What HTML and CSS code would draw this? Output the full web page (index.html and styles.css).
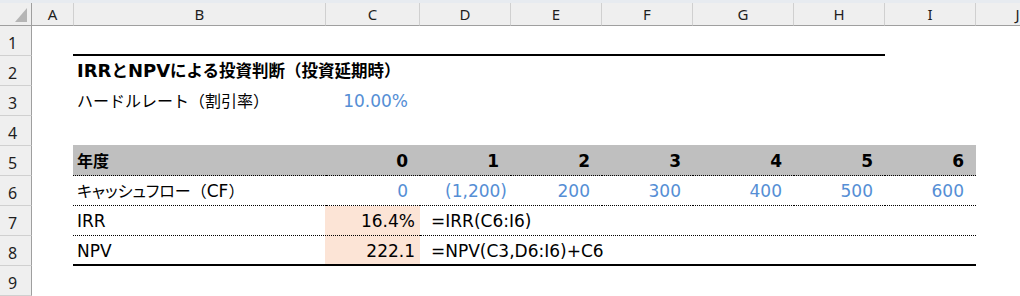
FILE: index.html
```html
<!DOCTYPE html>
<html lang="ja">
<head>
<meta charset="utf-8">
<title>IRRとNPVによる投資判断</title>
<link rel="stylesheet" href="styles.css">
</head>
<body>
<div class="sheet">
  <div class="topstrip"></div>
  <div class="grid">
    <div class="corner"><svg width="12" height="14" viewBox="0 0 12 14"><polygon points="12,0 12,14 0,14" fill="#b5b5b5"/></svg></div>
    <div class="ch">A</div>
    <div class="ch">B</div>
    <div class="ch">C</div>
    <div class="ch">D</div>
    <div class="ch">E</div>
    <div class="ch">F</div>
    <div class="ch">G</div>
    <div class="ch">H</div>
    <div class="ch">I</div>
    <div class="ch">J</div>

    <div class="rh">1</div>
    <div class="c"></div>
    <div class="c b rule-bottom span-bh"></div>
    <div class="c"></div>
    <div class="c"></div>

    <div class="rh">2</div>
    <div class="c"></div>
    <div class="c b title">IRR<span class="j">と</span>NPV<span class="j">による投資判断（投資延期時）</span></div>
    <div class="c span-c-end"></div>

    <div class="rh">3</div>
    <div class="c"></div>
    <div class="c b"><span class="j">ハードルレート（割引率）</span></div>
    <div class="c num blue">10.00%</div>
    <div class="c span-d-end"></div>

    <div class="rh">4</div>
    <div class="c span-a-end"></div>

    <div class="rh">5</div>
    <div class="c"></div>
    <div class="c b hdr bold"><span class="j">年度</span></div>
    <div class="c hdr bold num">0</div>
    <div class="c hdr bold num">1</div>
    <div class="c hdr bold num">2</div>
    <div class="c hdr bold num">3</div>
    <div class="c hdr bold num">4</div>
    <div class="c hdr bold num">5</div>
    <div class="c hdr bold num">6</div>
    <div class="c"></div>

    <div class="rh">6</div>
    <div class="c"></div>
    <div class="c b dot"><span class="j kana">キャッシュフロー</span><span class="j">（</span>CF<span class="j">）</span></div>
    <div class="c dot num blue">0</div>
    <div class="c dot num neg blue">(1,200)</div>
    <div class="c dot num blue">200</div>
    <div class="c dot num blue">300</div>
    <div class="c dot num blue">400</div>
    <div class="c dot num blue">500</div>
    <div class="c dot num blue">600</div>
    <div class="c"></div>

    <div class="rh">7</div>
    <div class="c"></div>
    <div class="c b dot">IRR</div>
    <div class="c dot peach num result">16.4%</div>
    <div class="c dot formula span-d-i">=IRR(C6:I6)</div>
    <div class="c"></div>

    <div class="rh">8</div>
    <div class="c"></div>
    <div class="c b thick">NPV</div>
    <div class="c thick peach num result">222.1</div>
    <div class="c thick formula span-d-i">=NPV(C3,D6:I6)+C6</div>
    <div class="c"></div>

    <div class="rh">9</div>
    <div class="c span-a-end"></div>
  </div>
</div>
</body>
</html>
```
FILE: styles.css
```css
html, body {
  margin: 0;
  padding: 0;
  background: #ffffff;
}

body {
  width: 1020px;
  height: 296px;
  overflow: hidden;
}

.sheet {
  width: 1060px;
}

.topstrip {
  height: 3px;
  background: #e7ebf0;
}

.grid {
  display: grid;
  grid-template-columns: 32px 42px 252px 94px 91px 91px 91px 101px 91px 91px 84px;
  grid-template-rows: 23px repeat(9, 30px);
  font-family: "DejaVu Sans", "Noto Sans CJK JP", sans-serif;
  font-size: 17px;
  color: #000000;
}

.grid > div {
  box-sizing: border-box;
  min-width: 0;
}

.corner {
  background: #efefef;
  border-right: 1px solid #9f9f9f;
  border-bottom: 1px solid #9f9f9f;
  display: flex;
  justify-content: flex-end;
  align-items: flex-end;
  padding: 0 4px 3px 0;
}

.corner svg {
  display: block;
}

.ch {
  background: #efefef;
  border-right: 1px solid #d0d0d0;
  border-bottom: 1px solid #9f9f9f;
  font-family: "Noto Sans", sans-serif;
  font-size: 15px;
  line-height: 22px;
  text-align: center;
  color: #1e1e1e;
}

.rh {
  background: #efefef;
  border-right: 1px solid #9f9f9f;
  border-bottom: 1px solid #d0d0d0;
  font-family: "Noto Sans", sans-serif;
  font-size: 16px;
  line-height: 30px;
  padding: 2px 6px 0 0;
  text-align: center;
  color: #1e1e1e;
}

.c {
  line-height: 30px;
  white-space: nowrap;
  padding-left: 3px;
}

.b {
  margin-left: -1px;
  padding-left: 4px;
}

.j {
  font-size: 16px;
}

.kana {
  font-feature-settings: "palt" 1;
}

.title .j {
  font-size: 16.5px;
}

.title,
.bold {
  font-weight: 700;
}

.title {
  font-size: 18px;
}

.span-bh {
  grid-column: 3 / 10;
}

.span-c-end {
  grid-column: 4 / 12;
}

.span-d-end {
  grid-column: 5 / 12;
}

.span-a-end {
  grid-column: 2 / 12;
}

.span-d-i {
  grid-column: 5 / 11;
}

.rule-bottom {
  border-bottom: 2px solid #000000;
}

.hdr {
  background: #bfbfbf;
  box-shadow: 0 -1px 0 #bfbfbf;
  border-bottom: 1px dotted #000000;
}

.dot {
  border-bottom: 1px dotted #000000;
}

.thick {
  border-bottom: 2px solid #000000;
}

.num {
  text-align: right;
  padding-left: 0;
  padding-right: 12px;
}

.num.neg {
  padding-right: 4px;
}

.num.result {
  padding-right: 5px;
}

.blue {
  color: #558ed5;
}

.peach {
  background: #fce4d6;
  margin-left: -1px;
}

.formula {
  padding-left: 11px;
}
```
